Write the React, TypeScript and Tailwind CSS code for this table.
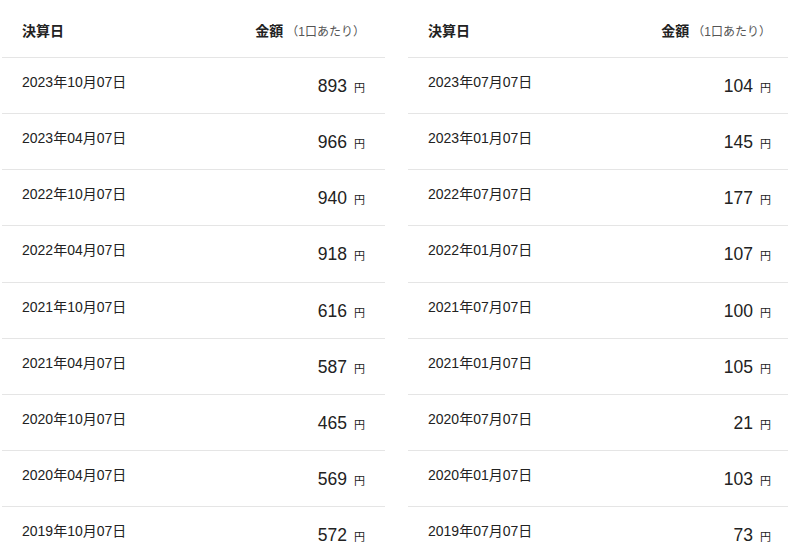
const left = [
  ["2023年10月07日", "893"],
  ["2023年04月07日", "966"],
  ["2022年10月07日", "940"],
  ["2022年04月07日", "918"],
  ["2021年10月07日", "616"],
  ["2021年04月07日", "587"],
  ["2020年10月07日", "465"],
  ["2020年04月07日", "569"],
  ["2019年10月07日", "572"],
];

const right = [
  ["2023年07月07日", "104"],
  ["2023年01月07日", "145"],
  ["2022年07月07日", "177"],
  ["2022年01月07日", "107"],
  ["2021年07月07日", "100"],
  ["2021年01月07日", "105"],
  ["2020年07月07日", "21"],
  ["2020年01月07日", "103"],
  ["2019年07月07日", "73"],
];

function Table({ rows }: { rows: string[][] }) {
  return (
    <div className="w-[383px] shrink-0">
      <div className="flex h-[58px] justify-between border-b border-[#e5e5e5] px-5">
        <span className="mt-[21px] text-[14px] font-bold leading-[20px] text-[#222]">決算日</span>
        <span className="mt-[21px] leading-[20px]">
          <span className="text-[14px] font-bold text-[#222]">金額</span>
          <span className="ml-[3px] text-[12px] text-[#555]">（1口あたり）</span>
        </span>
      </div>
      {rows.map(([date, amount]) => (
        <div key={date} className="flex h-[56.125px] justify-between border-b border-[#e5e5e5] px-5">
          <span className="mt-[14px] text-[14px] leading-[20px] text-[#222]">{date}</span>
          <span className="mt-[16px] leading-[24px] text-[#222]">
            <span className="text-[17.5px]">{amount}</span>
            <span className="ml-[7px] text-[11px]">円</span>
          </span>
        </div>
      ))}
    </div>
  );
}

export default function App() {
  return (
    <div
      className="flex h-[558px] w-[788px] gap-[23px] overflow-hidden bg-white pl-[2px]"
      style={{ fontFamily: '"Liberation Sans", "Noto Sans CJK JP", sans-serif' }}
    >
      <Table rows={left} />
      <Table rows={right} />
    </div>
  );
}
